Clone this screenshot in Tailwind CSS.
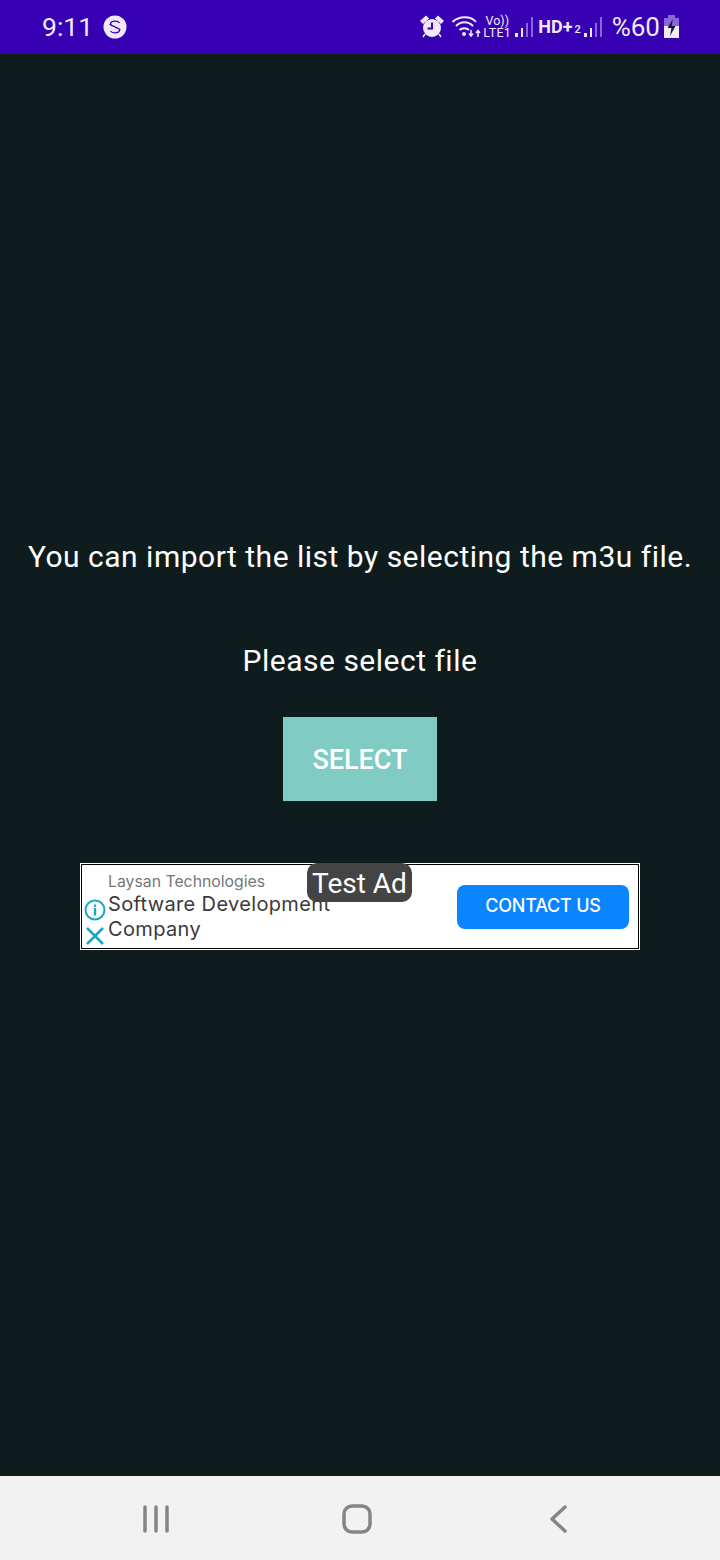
<!DOCTYPE html>
<html lang="en">
<head>
    <meta charset="UTF-8">
    <meta name="viewport" content="width=device-width, initial-scale=1.0">
    <title>Import list</title>
    <script src="https://cdn.jsdelivr.net/npm/@tailwindcss/browser@4"></script>
</head>
<body class="font-['Roboto',sans-serif]">
<div class="w-[720px] h-[1560px] flex flex-col bg-[#0f1c1e] overflow-hidden">
    <!-- status bar -->
    <div class="h-[54px] bg-[#3700b3] flex items-center justify-between pl-[42px] pr-[41px] text-[#f1e9fb]">
        <div class="flex items-center gap-[10px]">
            <span class="text-[26.500px] leading-none">9:11</span>
            <svg width="24" height="24" viewBox="0 0 24 24">
                <circle cx="12" cy="12" r="11.500" fill="#f1e9fb"/>
                <path d="M16.500 8C15 5.500 8.500 5.500 7.500 8.500C7 12 17 11.500 16.500 15.500C15.500 18.500 9 18.500 7.500 16M6.500 9C8 11 9 11 12 11.500M17.500 15C16 13 15 13 12 12.500" fill="none" stroke="#3700b3" stroke-width="1.200"/>
            </svg>
        </div>
        <div class="flex items-center">
            <!-- alarm -->
            <svg width="24" height="24" viewBox="0 0 24 24" class="mr-[8px]">
                <circle cx="12" cy="13" r="9" fill="#f1e9fb"/>
                <path d="M1 6L6 1.500L8 3.500L3 8ZM23 6L18 1.500L16 3.500L21 8ZM5 19L3 22M19 19L21 22" fill="#f1e9fb" stroke="#f1e9fb" stroke-width="1.500"/>
                <path d="M12 7.500V13.500H7.500" fill="none" stroke="#3700b3" stroke-width="2"/>
            </svg>
            <!-- wifi -->
            <svg width="29" height="26" viewBox="0 0 29 26" class="mr-[3px]">
                <path d="M0.500 8C7 1.500 19 1.500 24 8M4 12C9 7 16 7 21 12M7.500 16C10 13.500 14.500 13.500 17 16" fill="none" stroke="#f1e9fb" stroke-width="2"/>
                <circle cx="12" cy="20" r="2" fill="#f1e9fb"/>
                <path d="M19 16V22M17 19.500L19 22L21 19.500M26 23V17M24 19L26 16.500L28 19" fill="none" stroke="#f1e9fb" stroke-width="1.500"/>
            </svg>
            <div class="flex flex-col items-center text-[12.500px] leading-[12px] w-[26px]">
                <span>Vo))</span>
                <span class="tracking-[0.3px]">LTE1</span>
            </div>
            <svg width="20" height="22" viewBox="0 0 20 22" class="ml-[5px]">
                <rect x="0" y="17" width="3" height="4" fill="#f1e9fb"/>
                <rect x="6" y="12" width="2" height="9" fill="#f1e9fb"/>
                <rect x="11" y="7" width="2" height="14" fill="#8a66d8"/>
                <rect x="16" y="1" width="2" height="20" fill="#8a66d8"/>
            </svg>
            <span class="ml-[3px] text-[18px] font-bold leading-none">HD+</span>
            <span class="text-[11px] font-medium leading-none ml-[2px] mt-[5px]">2</span>
            <svg width="20" height="22" viewBox="0 0 20 22" class="ml-[3px]">
                <rect x="0" y="17" width="3" height="4" fill="#f1e9fb"/>
                <rect x="6" y="12" width="2" height="9" fill="#f1e9fb"/>
                <rect x="11" y="7" width="2" height="14" fill="#8a66d8"/>
                <rect x="16" y="1" width="2" height="20" fill="#8a66d8"/>
            </svg>
            <span class="ml-[8px] text-[26px] leading-none">%60</span>
            <svg width="15" height="24" viewBox="0 0 15 24" class="ml-[4px]">
                <rect x="4" y="0" width="7" height="3" fill="#8a66d8"/>
                <rect x="0" y="3" width="15" height="8" fill="#8a66d8"/>
                <rect x="0" y="11" width="15" height="12" fill="#f1e9fb"/>
                <path d="M9 4L3.500 13H7.500L6 21L11.500 11H7.500Z" fill="#1a1030"/>
            </svg>
        </div>
    </div>

    <!-- main -->
    <div class="flex-1 flex flex-col items-center pt-[485px]">
        <p class="text-white text-[30px] leading-[36px] tracking-[0.5px] whitespace-nowrap">You can import the list by selecting the m3u file.</p>
        <p class="text-white text-[30px] leading-[36px] mt-[68px] tracking-[0.5px]">Please select file</p>
        <button class="mt-[38px] w-[154px] h-[84px] pt-[2px] bg-[#80cbc4] text-white text-[27px] font-medium">SELECT</button>

        <!-- ad -->
        <div class="relative mt-[62px] w-[560px] h-[87px] bg-white border border-white outline outline-1 outline-black -outline-offset-2 flex items-center">
            <div class="w-[27px] h-full flex flex-col items-center justify-end gap-[5px] pb-[3px] shrink-0">
                <svg width="22" height="22" viewBox="0 0 22 22">
                    <circle cx="11" cy="11" r="9.500" fill="none" stroke="#17a9bd" stroke-width="2"/>
                    <rect x="9.800" y="9" width="2.400" height="7.500" fill="#17a9bd"/>
                    <rect x="9.800" y="5.500" width="2.400" height="2.400" fill="#17a9bd"/>
                </svg>
                <svg width="20" height="20" viewBox="0 0 20 20">
                    <path d="M2 2L18 18M18 2L2 18" stroke="#17a9bd" stroke-width="2.500"/>
                </svg>
            </div>
            <div class="flex-1 self-start pt-[7px] font-['Inter',sans-serif]">
                <p class="text-[#777777] text-[15.800px] leading-[21px]">Laysan Technologies</p>
                <p class="text-[#3a3a3a] text-[20px] leading-[25px] tracking-[0.35px] w-[230px]">Software Development Company</p>
            </div>
            <button class="w-[172px] h-[44px] pb-[2px] mr-[10px] rounded-[8px] bg-[#0a84ff] text-white text-[18px] tracking-[-0.2px] font-medium font-['Inter',sans-serif] shrink-0">CONTACT US</button>
            <span class="absolute left-[226px] -top-[1px] w-[105px] h-[39px] rounded-[10px] bg-[#444444] text-white text-[28px] leading-[41px] text-center">Test Ad</span>
        </div>
    </div>

    <!-- nav bar -->
    <div class="h-[84px] bg-[#f2f2f2] flex items-center pl-[143px] pt-[2px]">
        <svg width="26" height="28" viewBox="0 0 26 28">
            <path d="M2 2V26M13 2V26M24 2V26" stroke="#858585" stroke-width="3.500" stroke-linecap="round"/>
        </svg>
        <svg width="30" height="30" viewBox="0 0 30 30" class="ml-[173px]">
            <rect x="2" y="2" width="26" height="26" rx="8" fill="none" stroke="#858585" stroke-width="3.500"/>
        </svg>
        <svg width="18" height="28" viewBox="0 0 18 28" class="ml-[177px]">
            <path d="M16 2L3 14L16 26" fill="none" stroke="#858585" stroke-width="3.500" stroke-linecap="round" stroke-linejoin="round"/>
        </svg>
    </div>
</div>
</body>
</html>
